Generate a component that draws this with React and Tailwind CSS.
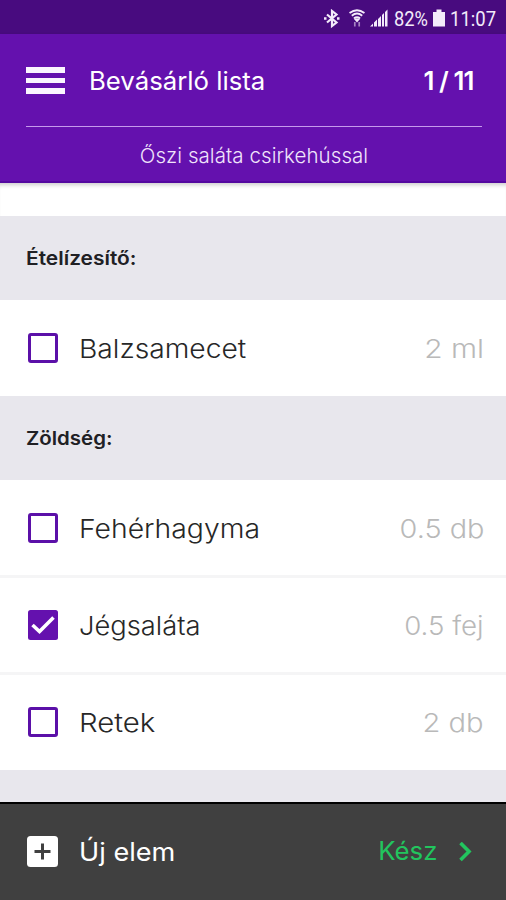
import React from "react";
import { useState } from "react";

const sections = [
  {
    title: "Ételízesítő:",
    titleClass: "scale-x-[1.1]",
    items: [
      { id: 1, name: "Balzsamecet", amount: "2 ml", nameClass: "scale-x-[1.085]", amountClass: "scale-x-[1.15]", rowClass: "h-[96px]" },
    ],
  },
  {
    title: "Zöldség:",
    titleClass: "scale-x-[1.075]",
    items: [
      { id: 2, name: "Fehérhagyma", amount: "0.5 db", nameClass: "scale-x-[1.09]", amountClass: "scale-x-[1.11]", rowClass: "h-[98px] pt-px border-b-3" },
      { id: 3, name: "Jégsaláta", amount: "0.5 fej", nameClass: "scale-x-[1.05]", amountClass: "scale-x-[1.065]", rowClass: "h-[97px] border-b-3" },
      { id: 4, name: "Retek", amount: "2 db", nameClass: "scale-x-[1.13]", amountClass: "scale-x-[1.12]", rowClass: "h-[95px] pb-px" },
    ],
  },
];

function StatusBar() {
  return (
    <div className="flex h-[34px] shrink-0 items-center bg-[#480b7f] pl-[323px] pt-[3px] font-['Roboto',sans-serif] text-[21px] leading-[30px] text-[#f3ebfa]">
      <svg className="h-5 w-[18px] shrink-0" viewBox="0 0 18 20" fill="none" stroke="currentColor" strokeWidth="2.2">
        <path d="M4 5.500l9.500 8-4.500 3.500v-15l4.500 3.500-9.500 8" />
        <path d="M1 9.500h2.500M14 9.500h2.500" strokeWidth="2.6" />
      </svg>
      <svg className="ml-[8px] h-5 w-4 shrink-0" viewBox="0 0 16 20" fill="none" stroke="currentColor">
        <path d="M0.500 4Q8-1.500 15.500 4M2.800 6.700Q8 2.500 13.200 6.700M5 9.300Q8 7 11 9.300" strokeWidth="1.9" />
        <path d="M4.500 9.500h7L8 13.500z" fill="currentColor" stroke="none" />
        <path d="M5.800 13v4.500M10.200 13v4.500" stroke="#a583c2" strokeWidth="1.700" />
      </svg>
      <svg className="ml-[5px] h-5 w-[18px] shrink-0" viewBox="0 0 18 20" fill="currentColor">
        <path d="M0 17.500l3-3v3zM4 13.500l3-3v7H4zM8 10l3-3v10.500H8z" />
        <path d="M12 6l2-2v13.500h-2zM15 3L17.500 .5v17H15z" />
      </svg>
      <div className="ml-[6px] w-[35px] shrink-0">
        <span className="inline-block origin-left scale-x-[0.87]">82%</span>
      </div>
      <svg className="ml-[4px] h-5 w-3 shrink-0" viewBox="0 0 12 20" fill="currentColor">
        <path d="M3.500 .5h5V3H12v14.500H0V3h3.500z" />
      </svg>
      <div className="ml-[5px] w-[50px] shrink-0">
        <span className="inline-block origin-left scale-x-[0.88]">11:07</span>
      </div>
    </div>
  );
}

function Header() {
  return (
    <header className="h-[149px] shrink-0 border-b-2 border-[#5409a0] bg-[#6411ae] pl-[26px] pr-[24px] text-white shadow-[0_2px_4px_rgba(0,0,0,0.2)]">
      <div className="flex h-[93px] items-center border-b border-[#c59aec] pt-px">
        <button className="flex w-[39px] flex-col gap-[5px]">
          <span className="h-[5.500px] w-full bg-[#fbf6ff]" />
          <span className="h-[5.500px] w-full bg-[#fbf6ff]" />
          <span className="h-[5.500px] w-full bg-[#fbf6ff]" />
        </button>
        <h1 className="ml-[24px] origin-left scale-x-[1.03] pt-[2px] text-[25px]">Bevásárló lista</h1>
        <span className="ml-auto mr-[9px] origin-right scale-x-[1.03] pt-[2px] text-[25px] font-semibold tracking-[-0.9px]">
          1 / 11
        </span>
      </div>
      <p className="pt-[14px] text-center text-[20.500px] leading-[30px] font-light tracking-[0.06px] text-[#f0e4fb]">
        Őszi saláta csirkehússal
      </p>
    </header>
  );
}

function Checkbox({ checked }) {
  if (checked) {
    return (
      <svg className="h-[30px] w-[30px] shrink-0" viewBox="0 0 30 30">
        <rect width="30" height="30" rx="2.500" fill="#6411ae" />
        <path d="M4.500 15l7 6.500L25.500 7.500" fill="none" stroke="#fff" strokeWidth="3.600" />
      </svg>
    );
  }
  return <span className="h-[30px] w-[30px] shrink-0 rounded-[3px] border-3 border-[#5b10a8] bg-white" />;
}

function Item({ item, checked, onToggle }) {
  return (
    <li
      onClick={onToggle}
      className={"flex items-center border-[#f5f5f6] bg-white pl-[28px] pr-[22px] text-[26px] font-light " + item.rowClass}
    >
      <Checkbox checked={checked} />
      <span className={"ml-[21px] origin-left pt-px text-[#272727] " + item.nameClass}>{item.name}</span>
      <span className={"ml-auto origin-right pt-px text-[#b9b9b9] " + item.amountClass}>{item.amount}</span>
    </li>
  );
}

function App() {
  const [checked, setChecked] = useState([3]);

  const toggle = (id) => {
    setChecked(checked.includes(id) ? checked.filter((c) => c !== id) : [...checked, id]);
  };

  return (
    <div className="flex h-[900px] w-[506px] flex-col overflow-hidden bg-white font-['Inter',sans-serif]">
      <StatusBar />
      <Header />
      <main className="flex-1 overflow-hidden bg-[#e8e7ed]">
        <div className="h-[33px] bg-white shadow-[inset_0_5px_4px_-3px_rgba(0,0,0,0.2)]" />
        {sections.map((section) => (
          <section key={section.title}>
            <h2 className="flex h-[84px] items-center pt-[3px] pl-[26px] text-[19px] font-semibold text-[#202024]">
              <span className={"origin-left " + section.titleClass}>{section.title}</span>
            </h2>
            <ul>
              {section.items.map((item) => (
                <Item
                  key={item.id}
                  item={item}
                  checked={checked.includes(item.id)}
                  onToggle={() => toggle(item.id)}
                />
              ))}
            </ul>
          </section>
        ))}
      </main>
      <footer className="flex h-[98px] shrink-0 items-center justify-between border-t-2 border-black bg-[#404040] pl-[27px] pr-[34px] text-[25px]">
        <button className="flex items-center text-white">
          <svg className="h-8 w-8" viewBox="0 0 32 32">
            <rect x="0" y="0" width="31" height="31" rx="3.500" fill="#fff" />
            <path d="M7.500 15.500h16M15.500 7.500v16" stroke="#404040" strokeWidth="3" />
          </svg>
          <span className="ml-[20px] origin-left scale-x-[1.085] pt-px">Új elem</span>
        </button>
        <button className="flex items-center text-[#22c55e]">
          <span className="origin-right scale-x-[1.03]">Kész</span>
          <svg className="ml-[22px] h-5 w-[13px]" viewBox="0 0 13 20" fill="none" stroke="currentColor" strokeWidth="3.600">
            <path d="M1.500 1l8.500 8.500-8.500 8.500" />
          </svg>
        </button>
      </footer>
    </div>
  );
}

export default App;
